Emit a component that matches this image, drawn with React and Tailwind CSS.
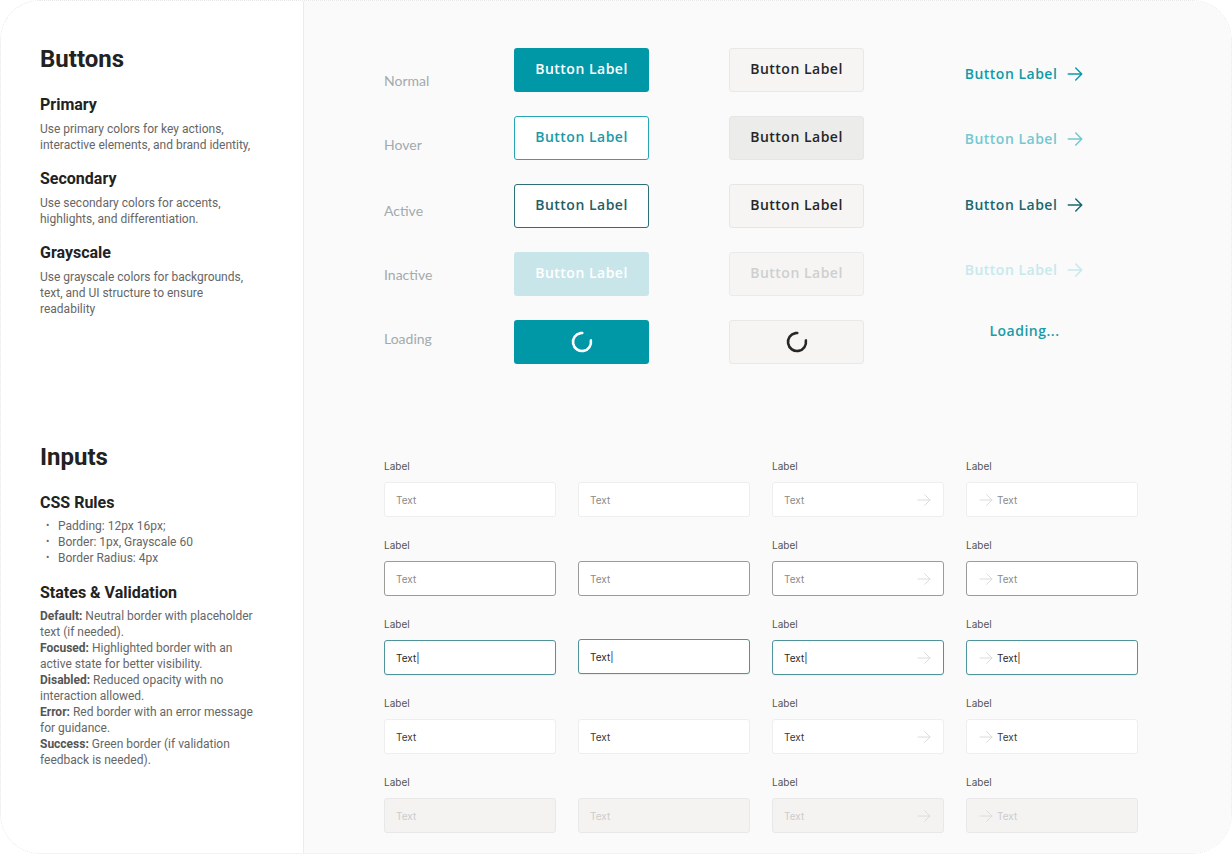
import React from "react";

const Arrow = ({ className = "", size = 16, stroke = 2 }) => (
  <svg width={size} height={size} viewBox="0 0 24 24" fill="none" stroke="currentColor" strokeWidth={stroke} strokeLinecap="round" strokeLinejoin="round" className={className}>
    <path d="M3 12h18M13 4l8 8-8 8" />
  </svg>
);

const Spinner = ({ color }) => (
  <svg width="24" height="24" viewBox="0 0 24 24" className="-rotate-[10deg]">
    <circle cx="12" cy="12" r="9" fill="none" stroke={color} strokeWidth="2.6" strokeLinecap="round" strokeDasharray="44 13" />
  </svg>
);

const btnBase = "w-[135px] h-[44px] rounded-[3px] flex items-center justify-center pb-[3px] text-[14px] font-semibold tracking-[0.5px]";
const btnFont = { fontFamily: "'Open Sans', sans-serif" };

function LeftPanel() {
  return (
    <div className="w-[303px] shrink-0 bg-white border-r border-[#ececec] pl-[39px] pr-[20px] pt-[44px]" style={{ fontFamily: "Roboto, 'Liberation Sans', sans-serif" }}>
      <h1 className="text-[24px] leading-[28px] font-bold text-[#222]">Buttons</h1>
      <h2 className="mt-[22px] text-[16px] leading-[20px] font-bold text-[#222]">Primary</h2>
      <p className="mt-[6px] text-[12px] leading-[16px] text-[#666]">Use primary colors for key actions,<br />interactive elements, and brand identity,</p>
      <h2 className="mt-[16px] text-[16px] leading-[20px] font-bold text-[#222]">Secondary</h2>
      <p className="mt-[6px] text-[12px] leading-[16px] text-[#666]">Use secondary colors for accents,<br />highlights, and differentiation.</p>
      <h2 className="mt-[16px] text-[16px] leading-[20px] font-bold text-[#222]">Grayscale</h2>
      <p className="mt-[6px] text-[12px] leading-[16px] text-[#666]">Use grayscale colors for backgrounds,<br />text, and UI structure to ensure<br />readability</p>

      <h1 className="mt-[126px] text-[24px] leading-[28px] font-bold text-[#222]">Inputs</h1>
      <h2 className="mt-[22px] text-[16px] leading-[20px] font-bold text-[#222]">CSS Rules</h2>
      <ul className="mt-[5px] text-[12px] leading-[16px] text-[#666]">
        {["Padding: 12px 16px;", "Border: 1px, Grayscale 60", "Border Radius: 4px"].map((t) => (
          <li key={t} className="flex"><span className="w-[18px] pl-[6px] text-[10px]">•</span>{t}</li>
        ))}
      </ul>
      <h2 className="mt-[17px] text-[16px] leading-[20px] font-bold text-[#222]">States &amp; Validation</h2>
      <div className="mt-[5px] text-[12px] leading-[16px] text-[#666]">
        <p><b className="font-bold text-[#555]">Default:</b> Neutral border with placeholder<br />text (if needed).</p>
        <p><b className="font-bold text-[#555]">Focused:</b> Highlighted border with an<br />active state for better visibility.</p>
        <p><b className="font-bold text-[#555]">Disabled:</b> Reduced opacity with no<br />interaction allowed.</p>
        <p><b className="font-bold text-[#555]">Error:</b> Red border with an error message<br />for guidance.</p>
        <p><b className="font-bold text-[#555]">Success:</b> Green border (if validation<br />feedback is needed).</p>
      </div>
    </div>
  );
}

function ButtonsSection() {
  const states = ["Normal", "Hover", "Active", "Inactive", "Loading"];
  return (
    <div className="flex">
      <div className="w-[130px] pt-[23px] flex flex-col gap-[44px] text-[14px] leading-[20px] text-[#a2aaad]" style={{ fontFamily: "Lato, sans-serif" }}>
        {states.map((s, i) => (
          <div key={s} className={i === 2 ? "mt-[2px]" : ""}>{s}</div>
        ))}
      </div>
      <div className="flex flex-col gap-[24px]" style={btnFont}>
        <div className={`${btnBase} bg-[#0097a7] text-white`}>Button Label</div>
        <div className={`${btnBase} bg-white border border-[#26a6b3] text-[#1a9aa8]`}>Button Label</div>
        <div className={`${btnBase} bg-white border border-[#2c6f76] text-[#1f5f66]`}>Button Label</div>
        <div className={`${btnBase} bg-[#c8e6ea] text-white`}>Button Label</div>
        <div className={`${btnBase} bg-[#0097a7] !pb-0`}><Spinner color="#ffffff" /></div>
      </div>
      <div className="ml-[80px] flex flex-col gap-[24px]" style={btnFont}>
        <div className={`${btnBase} bg-[#f6f5f4] border border-[#e8e8e8] text-[#262626]`}>Button Label</div>
        <div className={`${btnBase} bg-[#ececeb] border border-[#e6e6e6] text-[#262626]`}>Button Label</div>
        <div className={`${btnBase} bg-[#f6f5f4] border border-[#e6e6e6] text-[#262626]`}>Button Label</div>
        <div className={`${btnBase} bg-[#f6f5f4] border border-[#eaeaea] text-[#cfcfcf]`}>Button Label</div>
        <div className={`${btnBase} bg-[#f6f5f4] border border-[#e8e8e8] !pb-0`}><Spinner color="#262626" /></div>
      </div>
      <div className="ml-[93px] w-[135px] pt-[16px] flex flex-col items-center text-[14px] font-semibold tracking-[0.5px] leading-[20px]" style={btnFont}>
        <div className="flex items-center gap-[9px] text-[#0f9aa9]">Button Label <Arrow size={18} /></div>
        <div className="mt-[45px] flex items-center gap-[9px] text-[#74c8d1]">Button Label <Arrow size={18} /></div>
        <div className="mt-[46px] flex items-center gap-[9px] text-[#1b6870]">Button Label <Arrow size={18} /></div>
        <div className="mt-[45px] flex items-center gap-[9px] text-[#c6e9ed]">Button Label <Arrow size={18} /></div>
        <div className="mt-[41px] text-[#1a9aa8]">Loading...</div>
      </div>
    </div>
  );
}

const inputFont = { fontFamily: "Inter, 'Open Sans', sans-serif" };

function Input({ variant, icon, showLabel, nudge }) {
  const box = {
    default: "bg-white border border-[#eeeeee]",
    bordered: "bg-white border border-[#9b9b9b]",
    focused: "bg-white border border-[#4f949b] shadow-[0_1px_1px_rgba(0,0,0,0.06)]",
    filled: "bg-white border border-[#eeeeee]",
    disabled: "bg-[#f4f3f2] border border-[#e8e8e8]",
  }[variant];
  const textColor = {
    default: "text-[#8a8a8a]",
    bordered: "text-[#8a8a8a]",
    focused: "text-[#2a2a2a]",
    filled: "text-[#3a3a3a]",
    disabled: "text-[#cccccc]",
  }[variant];
  const arrowColor = "text-[#dcdcdc]";
  const label = variant === "focused" ? "Text|" : "Text";
  return (
    <div className="w-[172px] flex flex-col" style={inputFont}>
      <div className={`h-[14px] text-[10px] leading-[14px] text-[#555] ${showLabel ? "" : "invisible"}`}>Label</div>
      <div className={`mt-[9px] h-[35px] rounded-[3px] flex items-center px-[11px] ${box} ${nudge || ""}`}>
        {icon === "left" && <Arrow size={16} stroke={1.5} className={`${arrowColor} mr-[3px]`} />}
        <span className={`text-[10px] leading-[14px] ${textColor}`}>{label}</span>
        {icon === "right" && <Arrow size={16} stroke={1.5} className={`${arrowColor} ml-auto`} />}
      </div>
    </div>
  );
}

function InputsSection() {
  const variants = ["default", "bordered", "focused", "filled", "disabled"];
  return (
    <div className="flex flex-col gap-[21px]">
      {variants.map((v) => (
        <div key={v} className="flex gap-[22px]">
          <Input variant={v} showLabel />
          <Input variant={v} showLabel={false} nudge={v === "focused" ? "-translate-y-px" : ""} />
          <Input variant={v} showLabel icon="right" />
          <Input variant={v} showLabel icon="left" />
        </div>
      ))}
    </div>
  );
}

export default function App() {
  return (
    <div className="w-[1232px] h-[854px] bg-white">
      <div className="w-full h-full rounded-[40px] border border-dotted border-[#e6e6e6] overflow-hidden flex">
        <LeftPanel />
        <div className="flex-1 bg-[#fafafa] pl-[80px] pt-[47px]">
          <ButtonsSection />
          <div className="mt-[95px]">
            <InputsSection />
          </div>
        </div>
      </div>
    </div>
  );
}
